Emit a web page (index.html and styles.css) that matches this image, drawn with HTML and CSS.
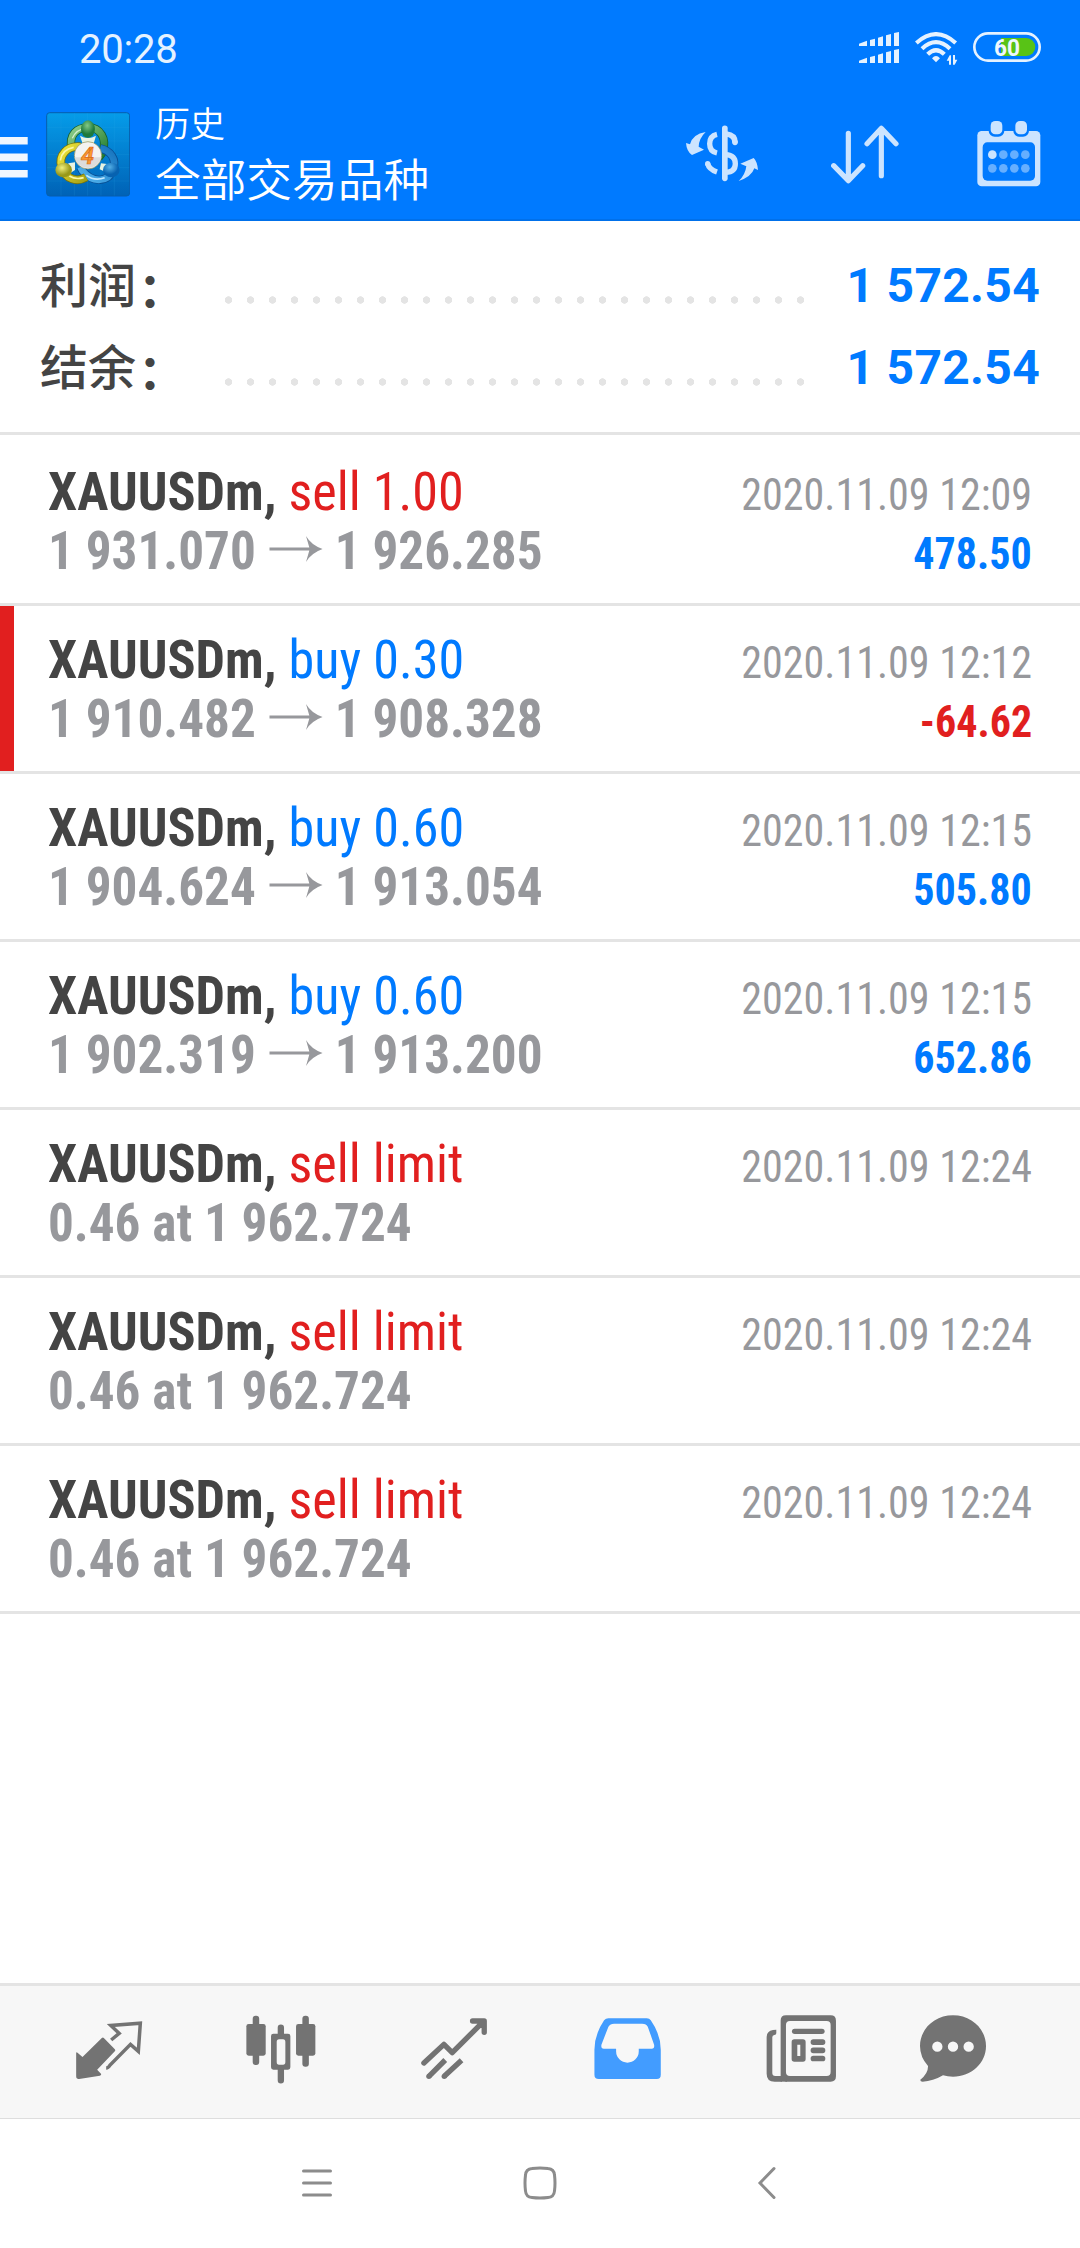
FILE: index.html
```html
<!DOCTYPE html>
<html lang="zh-CN">
<head>
<meta charset="utf-8">
<title>历史</title>
<link rel="stylesheet" href="styles.css">
</head>
<body>
<header class="header">
  <div class="status">
    <span class="clock">20:28</span>
    <div class="status-icons">
      <svg class="signal" viewBox="597 96 120 96" fill="#e5f2ff">
        <g id="sig"><path d="M597 131L621 122V138H597ZM630 120L645 116V138H630ZM654 113L669 109V138H654ZM678 106L693 102V138H678ZM702 99L717 96V138H702Z"/></g>
        <use href="#sig" y="51"/>
      </svg>
      <svg class="wifi" viewBox="765 96 129 99" fill="none" stroke="#e5f2ff" stroke-width="12.5">
        <path d="M769 129Q828 76 887 129M786 146Q828 107 870 146M803 163Q828 138 853 163"/>
        <path d="M816 175Q828 161 840 175L828 187Z" fill="#e5f2ff" stroke="none"/>
        <path d="M873 194V166H869L860 182H867V194ZM879 165V194H884L892 179H885V165Z" fill="#e5f2ff" stroke="none"/>
      </svg>
      <svg class="battery" viewBox="939 96 204 90">
        <rect x="943" y="100" width="196" height="82" rx="41" fill="none" stroke="#e5f2ff" stroke-width="8"/>
        <path d="M1023 114H1099A27 27 0 0 1 1099 168H1023Z" fill="#58c316"/>
        <text class="battery-text" x="1002" y="167" textLength="78" lengthAdjust="spacingAndGlyphs">60</text>
      </svg>
    </div>
  </div>
  <div class="appbar">
    <svg class="menu" viewBox="0 0 28 41" fill="#f0f6ff"><path d="M0 0H27.7V7.6H0ZM0 16.5H27.7V24.2H0ZM0 33H27.7V40.6H0Z"/></svg>
    <svg class="logo" viewBox="137 67 253 254">
      <defs>
        <linearGradient id="bg" x1="0" y1="0" x2="0" y2="1"><stop offset="0" stop-color="#059ce9"/><stop offset="1" stop-color="#0062b6"/></linearGradient>
        <linearGradient id="gr" x1="0" y1="0" x2="1" y2="1"><stop offset="0" stop-color="#8fd08c"/><stop offset="1" stop-color="#1f7a2b"/></linearGradient>
        <linearGradient id="ye" x1="0" y1="0" x2="1" y2="1"><stop offset="0" stop-color="#f1e63a"/><stop offset="1" stop-color="#a5a116"/></linearGradient>
        <linearGradient id="bl" x1="1" y1="0" x2="0" y2="1"><stop offset="0" stop-color="#1472bd"/><stop offset="1" stop-color="#54b6f0"/></linearGradient>
        <radialGradient id="gb" cx=".45" cy=".3"><stop offset="0" stop-color="#82c987"/><stop offset="1" stop-color="#1d7a3c"/></radialGradient>
        <radialGradient id="yb" cx=".4" cy=".35"><stop offset="0" stop-color="#f0ef7c"/><stop offset="1" stop-color="#98981a"/></radialGradient>
        <radialGradient id="bb" cx=".4" cy=".3"><stop offset="0" stop-color="#55b0e6"/><stop offset="1" stop-color="#0762b0"/></radialGradient>
      </defs>
      <rect x="139" y="69" width="249" height="250" rx="9" fill="url(#bg)" stroke="#075eac" stroke-width="3"/>
      <path d="M182 70V318M222 70V318M262 70V318M302 70V318M342 70V318M140 114H387M140 154H387M140 194H387M140 234H387M140 274H387" stroke="#37a9ed" stroke-opacity=".22" stroke-width="2"/>
      <g fill="none">
        <path d="M214 178C204 133 232 113 263 113C300 113 321 146 307 188L295 204" stroke="#165f2a" stroke-width="25"/>
        <path d="M214 178C204 133 232 113 263 113C300 113 321 146 307 188L295 204" stroke="url(#gr)" stroke-width="20"/>
        <path d="M216 146Q228 118 257 116" stroke="#d4f0cf" stroke-width="4"/>
        <path d="M300 176C330 183 350 207 338 240C325 278 277 282 246 243L240 232" stroke="#084f94" stroke-width="25"/>
        <path d="M300 176C330 183 350 207 338 240C325 278 277 282 246 243L240 232" stroke="url(#bl)" stroke-width="20"/>
        <path d="M258 257Q283 275 313 264" stroke="#c4eaff" stroke-width="5"/>
        <path d="M240 171C202 167 173 196 184 232C195 269 230 279 257 263" stroke="#77720a" stroke-width="26"/>
        <path d="M240 171C202 167 173 196 184 232C195 269 230 279 257 263" stroke="url(#ye)" stroke-width="21"/>
        <path d="M180 212Q185 179 220 173M207 259Q226 271 250 264" stroke="#fcf7a4" stroke-width="5"/>
      </g>
      <path d="M239 138Q263 152 287 138L280 162H247ZM204 221L224 218V241L207 252ZM302 221L320 223L316 247L298 239Z" fill="#e7f3e2"/>
      <ellipse cx="263" cy="118" rx="21" ry="26" fill="url(#gb)"/>
      <ellipse cx="190" cy="241" rx="25" ry="22" fill="url(#yb)"/>
      <ellipse cx="333" cy="241" rx="25" ry="22" fill="url(#bb)"/>
      <circle cx="263" cy="197" r="41" fill="#f4f3f1" stroke="#8c8c55" stroke-width="2"/>
      <path d="M223 203H303A41 41 0 0 1 223 203Z" fill="#dcdcdc"/>
      <text class="logo-text" x="242" y="223" textLength="39" lengthAdjust="spacingAndGlyphs">4</text>
    </svg>
    <div class="titles"><div class="sub">历史</div><div class="main">全部交易品种</div></div>
    <div class="actions">
      <svg class="act-currency" viewBox="78 360 216 204" fill="none" stroke="#cce4ff" stroke-width="16">
        <path d="M194.5 385V535" stroke-width="17" stroke-linecap="round"/>
        <path d="M199 402Q225 405 225 427" stroke-width="17"/><circle cx="225" cy="427" r="8.500" fill="#cce4ff" stroke="none"/>
        <path d="M197 464Q226 466 226 491Q226 516 197 517M171 403Q149 408 149 431Q149 454 171 459M171 516Q147 508 143 491"/>
        <circle cx="143" cy="491" r="8" fill="#cce4ff" stroke="none"/>
        <path d="M137 396Q98 402 90 433L78 429Q80 455 96 465L132 449L116 440Q117 415 137 396ZM236 543Q275 530 283 505L294 510Q292 485 281 474L241 491L259 499Q256 525 236 543Z" fill="#cce4ff" stroke="none"/>
      </svg>
      <svg class="act-sort" viewBox="514 360 203 204" fill="none" stroke="#cce4ff" stroke-width="15.5" stroke-linecap="round" stroke-linejoin="round"><path d="M566 400V541M522 497L566 542L609 497M665 527V386M622 431L665 385L709 431"/></svg>
      <svg class="act-calendar" viewBox="950 360 192 204">
        <rect x="951" y="393" width="189" height="166" rx="13" fill="#cce4ff"/>
        <rect x="967" y="427" width="157" height="115" rx="14" fill="#007aff"/>
        <rect x="985" y="357" width="47" height="53" rx="18" fill="#007aff"/><rect x="1059" y="357" width="47" height="53" rx="18" fill="#007aff"/>
        <rect x="991" y="363" width="35" height="40" rx="14" fill="#cce4ff"/><rect x="1065" y="363" width="35" height="40" rx="14" fill="#cce4ff"/>
        <g fill="#66afff"><circle cx="996" cy="464" r="13" fill="#cce4ff"/><circle cx="1029" cy="464" r="13"/><circle cx="1062" cy="464" r="13"/><circle cx="1095" cy="464" r="13"/><circle cx="996" cy="505" r="13"/><circle cx="1029" cy="505" r="13"/><circle cx="1062" cy="505" r="13"/><circle cx="1095" cy="505" r="13"/></g>
      </svg>
    </div>
  </div>
</header>

<section class="summary">
  <div class="sum-row"><span class="label">利润<b>：</b></span><span class="dots"></span><span class="total">1 572.54</span></div>
  <div class="sum-row"><span class="label">结余<b>：</b></span><span class="dots"></span><span class="total">1 572.54</span></div>
</section>

<main class="list">
  <article class="deal">
    <div class="line"><span class="symbol">XAUUSDm, <span class="side sell">sell 1.00</span></span><span class="date">2020.11.09 12:09</span></div>
    <div class="line"><span class="price">1 931.070<svg class="arrow" viewBox="0 0 56 26"><path d="M0 11.500H42L38.500 0Q44 9 56 13Q44 17 38.500 26L42 14.500H0Z"/></svg>1 926.285</span><span class="profit">478.50</span></div>
  </article>
  <article class="deal loss">
    <div class="line"><span class="symbol">XAUUSDm, <span class="side buy">buy 0.30</span></span><span class="date">2020.11.09 12:12</span></div>
    <div class="line"><span class="price">1 910.482<svg class="arrow" viewBox="0 0 56 26"><path d="M0 11.500H42L38.500 0Q44 9 56 13Q44 17 38.500 26L42 14.500H0Z"/></svg>1 908.328</span><span class="profit neg">-64.62</span></div>
  </article>
  <article class="deal">
    <div class="line"><span class="symbol">XAUUSDm, <span class="side buy">buy 0.60</span></span><span class="date">2020.11.09 12:15</span></div>
    <div class="line"><span class="price">1 904.624<svg class="arrow" viewBox="0 0 56 26"><path d="M0 11.500H42L38.500 0Q44 9 56 13Q44 17 38.500 26L42 14.500H0Z"/></svg>1 913.054</span><span class="profit">505.80</span></div>
  </article>
  <article class="deal">
    <div class="line"><span class="symbol">XAUUSDm, <span class="side buy">buy 0.60</span></span><span class="date">2020.11.09 12:15</span></div>
    <div class="line"><span class="price">1 902.319<svg class="arrow" viewBox="0 0 56 26"><path d="M0 11.500H42L38.500 0Q44 9 56 13Q44 17 38.500 26L42 14.500H0Z"/></svg>1 913.200</span><span class="profit">652.86</span></div>
  </article>
  <article class="deal">
    <div class="line"><span class="symbol">XAUUSDm, <span class="side sell">sell limit</span></span><span class="date">2020.11.09 12:24</span></div>
    <div class="line"><span class="price">0.46 at 1 962.724</span></div>
  </article>
  <article class="deal">
    <div class="line"><span class="symbol">XAUUSDm, <span class="side sell">sell limit</span></span><span class="date">2020.11.09 12:24</span></div>
    <div class="line"><span class="price">0.46 at 1 962.724</span></div>
  </article>
  <article class="deal">
    <div class="line"><span class="symbol">XAUUSDm, <span class="side sell">sell limit</span></span><span class="date">2020.11.09 12:24</span></div>
    <div class="line"><span class="price">0.46 at 1 962.724</span></div>
  </article>
</main>

<nav class="tabs">
  <svg class="tab" viewBox="31.5 40 228 216"><path d="M124 115Q127 112 130 115L163 149Q166 152 163 155L110 210L122 223Q123 227 118 228L56 238Q47 239 47 230V161Q47 156 51 159L66 172Z"/><path class="stroke" d="M152 121L176 101L151 77.500L239.500 70.500L233.500 155L210 134L148 197Q143 205 137 205" stroke-width="10.500"/></svg>
  <svg class="tab" viewBox="549.9 40 228 216"><rect x="560" y="73" width="58" height="95" rx="7"/><rect x="579" y="48" width="19.500" height="148" rx="9"/><rect x="709" y="73" width="58" height="95" rx="7"/><rect x="728" y="48" width="19.500" height="153" rx="9"/><path d="M654 104V84A9.500 9.500 0 0 1 673 84V104ZM654 208V242A9.500 9.500 0 0 0 673 242V208Z"/><path fill-rule="evenodd" d="M641 102H685Q692 102 692 109V203Q692 210 685 210H641Q634 210 634 203V109Q634 102 641 102ZM658 119Q651 119 651 127V187Q651 195 658 195H670Q677 195 677 187V127Q677 119 670 119Z"/></svg>
  <svg class="tab" viewBox="48.3 40 228 216"><path class="stroke" d="M72 190L132 134L157 159L248 68M218 64H253V98" stroke-width="16" stroke-linecap="round" stroke-linejoin="round"/><path class="stroke" d="M87 230L136 181M133 230L185 182" stroke-width="16"/><circle cx="87" cy="230" r="8"/><circle cx="133" cy="230" r="8"/></svg>
  <svg class="tab active" viewBox="566.7 40 228 216"><path fill-rule="evenodd" d="M625 56H740Q748 56 752 62Q782 105 782 150V225Q782 238 770 238H596Q583 238 583 225V150Q583 105 612 62Q617 56 625 56ZM642 72Q630 72 625 81L604 135Q602 147 611 147H648V155A34 34 0 0 0 716 155V147H755Q764 147 762 135L743 81Q739 72 726 72Z"/></svg>
  <svg class="tab" viewBox="65.1 40 228 216"><path fill-rule="evenodd" d="M137 47H271Q287 47 287 63V230Q287 246 271 246H137L121 238V63Q121 47 137 47ZM149 64Q137 64 137 76V217Q137 229 149 229H259Q271 229 271 217V76Q271 64 259 64Z"/><path d="M108 90V101Q108 106 102 106Q96 107 96 113V220Q96 229 105 229H125V246H103Q79 246 79 222V112Q79 90 108 90Z"/><rect x="155" y="87" width="98" height="16" rx="8"/><path fill-rule="evenodd" d="M162 119H188Q196 119 196 127V178Q196 186 188 186H162Q154 186 154 178V127Q154 119 162 119ZM171 135V169H180V135Z"/><rect x="211" y="119" width="44" height="17" rx="8"/><rect x="211" y="143.500" width="44" height="17" rx="8"/><rect x="211" y="168" width="44" height="17" rx="8"/><path d="M121 230H140V246H121Z"/></svg>
  <svg class="tab last" viewBox="525 40 228 216"><path fill-rule="evenodd" d="M639 47C694 47 738 88 738 139C738 190 694 231 639 231Q623 231 609 227Q579 245 548 246Q540 246 541 240Q565 222 564 199Q540 172 540 139C540 88 584 47 639 47ZM592 125.500A15.500 15.500 0 1 0 592 156.500A15.500 15.500 0 1 0 592 125.500ZM639 125.500A15.500 15.500 0 1 0 639 156.500A15.500 15.500 0 1 0 639 125.500ZM686 125.500A15.500 15.500 0 1 0 686 156.500A15.500 15.500 0 1 0 686 125.500Z"/></svg>
</nav>

<footer class="sysnav">
  <svg class="sys-recent" viewBox="0 0 30 34"><path d="M1.500 5H28.500M1.500 17H28.500M1.500 29H28.500" stroke-linecap="round"/></svg>
  <svg class="sys-home" viewBox="0 0 34 34"><path d="M9 2.500Q17 1.500 25 2.500Q31 3 31.500 9Q32.500 17 31.500 25Q31 31 25 31.500Q17 32.500 9 31.500Q3 31 2.500 25Q1.500 17 2.500 9Q3 3 9 2.500Z"/></svg>
  <svg class="sys-back" viewBox="0 0 20 34"><path d="M17 2.500L3 17L17 31.500" stroke-linecap="round"/></svg>
</footer>
</body>
</html>
```
FILE: styles.css
```css
* { box-sizing: border-box; }

body {
  margin: 0;
  width: 1080px;
  height: 2248px;
  display: flex;
  flex-direction: column;
  overflow: hidden;
  background: #fff;
  color: #444;
  font-family: Roboto, "Noto Sans CJK SC", sans-serif;
}

svg { display: block; flex: none; }

/* Header */
.header {
  height: 221px;
  flex: none;
  background: #007aff;
  border-bottom: 2px solid #0070ea;
  color: #fff;
}
.status { display: flex; height: 96px; padding: 0 39px 0 79px; }
.clock { font-size: 40px; line-height: 99px; color: #e5f2ff; letter-spacing: -.2px; }
.status-icons { display: flex; margin-left: auto; padding-top: 32px; }
.signal { width: 40px; height: 32px; margin-right: 16px; }
.wifi { width: 43px; height: 33px; margin-right: 15px; }
.battery { width: 68px; height: 30px; }
.battery-text { font: 700 74px Roboto, sans-serif; fill: #eef7ff; }

.appbar { display: flex; align-items: flex-start; height: 123px; padding-right: 39.3px; }
.menu { width: 28px; height: 41px; margin-top: 40.5px; }
.logo { width: 84.3px; height: 84.7px; margin: 16.3px 0 0 17.7px; }
.logo-text { font: italic 700 70px Roboto, sans-serif; fill: #fb9a2f; stroke: #d86b21; stroke-width: 2; }
.titles { margin-left: 25px; font-family: "Noto Sans CJK SC", sans-serif; font-weight: 350; white-space: nowrap; }
.sub { font-size: 35px; line-height: 52px; }
.main { font-size: 45.7px; line-height: 59px; }
.actions { display: flex; margin: 24px 0 0 auto; }
.act-currency { width: 72px; height: 68px; margin-right: 73.3px; }
.act-sort { width: 67.7px; height: 68px; margin-right: 77.7px; }
.act-calendar { width: 64px; height: 68px; }

/* Totals */
.summary {
  height: 214px;
  flex: none;
  padding: 24px 40px 0;
  border-bottom: 3px solid #e4e4e4;
}
.sum-row { display: flex; height: 82px; line-height: 82px; font-size: 48px; }
.label { width: 184px; line-height: 74px; font-family: "Noto Sans CJK SC", sans-serif; font-weight: 500; }
.label b { margin-left: 2px; line-height: 1; vertical-align: -4px; }
.dots {
  width: 594px;
  height: 8px;
  margin-top: 51px;
  background: radial-gradient(circle at 4.5px 4px, #e4e4e4 3.4px, transparent 4px) 0 0 / 22px 8px;
}
.total { margin-left: auto; font-weight: 700; color: #007aff; letter-spacing: .3px; }

/* Deals */
.list { padding-top: 3px; flex: 1; }
.deal {
  height: 168px;
  padding: 24px 48px 0;
  border-bottom: 3px solid #e4e4e4;
  font-family: "Roboto Condensed", Roboto, sans-serif;
  font-stretch: 75%;
}
.deal.loss { background: linear-gradient(#e11f1f, #e11f1f) 0 0 / 14px 165px no-repeat; }
.line { display: flex; justify-content: space-between; align-items: baseline; height: 59px; line-height: 59px; white-space: nowrap; }
.symbol, .price { font-size: 54px; font-weight: 700; transform-origin: 0 50%; }
.symbol { transform: scaleX(.966); }
.price { color: #97989c; transform: scaleX(.948); }
.side { font-weight: 400; }
.sell { color: #e11f1f; }
.buy { color: #007aff; }
.arrow { display: inline-block; width: 59.3px; height: 26px; margin: 0 11px 0 13px; fill: #97989c; vertical-align: 7px; }
.date, .profit { font-size: 45px; transform: scaleX(.935); transform-origin: 100% 50%; }
.date { color: #97989c; }
.profit { font-weight: 700; color: #007aff; }
.profit.neg { color: #e11f1f; }

/* Bottom tabs */
.tabs {
  display: flex;
  gap: 96.8px;
  flex: none;
  height: 136px;
  padding: 27.3px 0 0 70.5px;
  background: #f7f7f7;
  border-top: 3px solid #e4e4e4;
  border-bottom: 1px solid #dedede;
}
.tab { width: 76px; height: 72px; fill: #737373; }
.tab.active { fill: #429cff; }
.tab.last { margin-left: -19.3px; }
.stroke { fill: none; stroke: #737373; }

/* System navigation */
.sysnav { display: flex; flex: none; height: 129px; padding: 47px 0 0 302px; }
.sysnav svg { fill: none; stroke: #8c8c8c; stroke-width: 3; height: 34px; }
.sys-recent { width: 30px; }
.sys-home { width: 34px; margin-left: 191px; }
.sys-back { width: 20px; margin-left: 200px; }
```
